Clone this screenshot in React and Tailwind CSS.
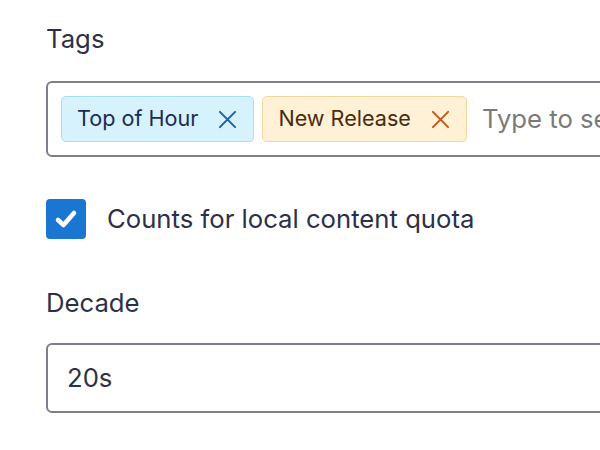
import React from "react";

function XIcon({ className }) {
  return (
    <svg viewBox="0 0 20 20" className={className} fill="none" stroke="currentColor" strokeWidth="2.1" strokeLinecap="round">
      <path d="M2 2 L18 18 M18 2 L2 18" />
    </svg>
  );
}

function Chip({ label, tone }) {
  const styles =
    tone === "blue"
      ? "bg-[#d6f2fc] border-[#a3def4] text-[#1b2a57]"
      : "bg-[#fef1d6] border-[#f4d79c] text-[#4a2c0c]";
  const xColor = tone === "blue" ? "text-[#1e5fae]" : "text-[#c2581b]";
  return (
    <div className={`flex items-center h-[46px] pl-[15px] pr-[16px] rounded-[5px] border shrink-0 ${styles}`}>
      <span className="leading-none text-[21.6px] whitespace-nowrap">{label}</span>
      <XIcon className={`w-[19px] h-[19px] ml-[20px] ${xColor}`} />
    </div>
  );
}

export default function App() {
  return (
    <div
      className="w-[600px] h-[450px] overflow-hidden bg-white text-[25.7px] text-[#2c3147]"
      style={{ fontFamily: "Inter, 'Noto Sans', sans-serif" }}
    >
      <div className="pl-[46px] pt-[21px] w-[760px]">
        <div className="leading-[36px]">Tags</div>
        <div className="mt-[24px] h-[76px] border-2 border-[#7b7e8f] rounded-[6px] flex items-center gap-[8px] px-[13px]">
          <Chip label="Top of Hour" tone="blue" />
          <Chip label="New Release" tone="orange" />
          <span className="ml-[7px] text-[#7a7a7a] whitespace-nowrap">Type to search</span>
        </div>
        <div className="mt-[42px] flex items-center gap-[21px]">
          <div className="w-[40px] h-[40px] rounded-[4px] bg-[#1b76d2] flex items-center justify-center">
            <svg viewBox="0 0 40 40" className="w-[40px] h-[40px]" fill="none" stroke="white" strokeWidth="4.5" strokeLinecap="round" strokeLinejoin="round">
              <path d="M12 21 L17.5 26 L28 14" />
            </svg>
          </div>
          <span className="leading-[36px] whitespace-nowrap">Counts for local content quota</span>
        </div>
        <div className="mt-[46px] leading-[36px]">Decade</div>
        <div className="mt-[22px] h-[70px] border-2 border-[#7b7e8f] rounded-[6px] flex items-center pl-[19px]">
          <span>20s</span>
        </div>
      </div>
    </div>
  );
}
